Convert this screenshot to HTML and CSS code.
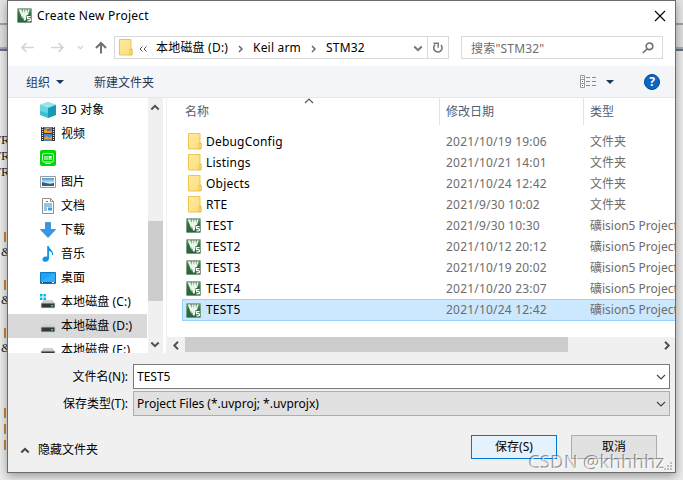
FILE: index.html
```
<!DOCTYPE html>
<html lang="zh-CN">
<head>
<meta charset="UTF-8" />
<title>Create New Project</title>
<link rel="stylesheet" href="styles.css">
</head>
<body>
<!-- shared icons -->
<svg class="defs">
  <defs>
    <linearGradient id="gold" x1="0" y1="0" x2="1" y2="1"><stop offset="0" stop-color="#ffe9a2" /><stop offset="1" stop-color="#fcdd7c" /></linearGradient>
    <linearGradient id="green" x1="0" y1="0" x2="0" y2="1"><stop offset="0" stop-color="#6e9b78" /><stop offset=".4" stop-color="#2f7341" /><stop offset="1" stop-color="#28623a" /></linearGradient>
    <linearGradient id="sky" x1="0" y1="0" x2="0" y2="1"><stop offset="0" stop-color="#3f97de" /><stop offset=".6" stop-color="#d5ecf7" /><stop offset="1" stop-color="#2b6170" /></linearGradient>
    <symbol id="folder" viewBox="0 0 14 17">
      <path d="M.5.5h11.5v9.500h1v6H.5z" fill="url(#gold)" stroke="#ecc64f" />
      <path d="M11 15.500v-5h2v5z" fill="#ffe694" stroke="#e3b93d" stroke-width=".8" />
    </symbol>
    <symbol id="keil" viewBox="0 0 15 15">
      <rect x=".3" y=".3" width="14.400" height="14.400" rx="1.200" fill="url(#green)" stroke="#8eab95" stroke-width=".6" />
      <path d="M1.800 1.500h2.700l.8 3.600.6-3.600h1.400l.5 3.500.6-3.500h1.300l.4 3.500.8-3.500h1.800L11 7H9.700l-1 5.500H7L5.800 8l-.4 3z" fill="#eef5ef" />
      <path d="M13.600 8.600h-3v2.100h1.900q1 0 1 1t-1 1.100h-2.100" fill="none" stroke="#fff" stroke-width="1.300" />
    </symbol>
    <symbol id="drive" viewBox="0 0 16 16">
      <path d="M3.500 6h9l2.500 3.500H1z" fill="#cfd1d2" />
      <rect x="1.300" y="9.300" width="13.400" height="4.400" rx=".6" fill="#333b3a" stroke="#8f9494" stroke-width=".6" />
      <rect x="11" y="11" width="2" height="1.500" fill="#38e03f" />
    </symbol>
    <symbol id="down" viewBox="0 0 10 6"><path d="M1 1l4 4 4-4" fill="none" stroke="currentColor" stroke-width="1.200" /></symbol>
    <symbol id="thick" viewBox="0 0 10 7"><path d="M1.300 1.500L5 5.200l3.700-3.700" fill="none" stroke="currentColor" stroke-width="2" /></symbol>
    <symbol id="tri" viewBox="0 0 8 4"><path d="M0 0h8L4 4z" fill="#1e395b" /></symbol>
  </defs>
</svg>

<div class="editor">
<pre class="code">TR
TR
TR



<b></b>
<i>&amp;</i>

<b></b>
<i>&amp;</i>

<b></b>
<i>&amp;</i>



<b></b>
<b></b>
<b></b></pre>
</div>

<div class="dialog">
  <div class="titlebar">
    <svg class="keil"><use href="#keil" /></svg>
    <span class="title">Create New Project</span>
    <svg class="close" viewBox="0 0 12 12"><path d="M1 1l10 10M11 1L1 11" stroke="#000" stroke-width="1.100" /></svg>
  </div>

  <div class="nav">
    <div class="arrows">
      <svg class="back" viewBox="0 0 12 10"><path d="M12 5H1M5 1L1 5l4 4" /></svg>
      <svg class="fwd" viewBox="0 0 12 10"><path d="M0 5h11M7 1l4 4-4 4" /></svg>
      <svg class="recent" viewBox="0 0 10 7"><use href="#thick" /></svg>
      <svg class="up" viewBox="0 0 12 12"><path d="M6 12V1.500M1 6.500l5-5 5 5" /></svg>
    </div>
    <div class="path">
      <svg class="folder"><use href="#folder" /></svg>
      <svg class="dbl" viewBox="0 0 8 6"><path d="M3.500.5L1 3l2.500 2.500M7.500.5L5 3l2.500 2.500" /></svg>
      <span class="crumb disk">本地磁盘 (D:)</span>
      <svg class="sep" viewBox="0 0 5 8"><path d="M1 1l3 3-3 3" /></svg>
      <span class="crumb keilarm">Keil arm</span>
      <svg class="sep" viewBox="0 0 5 8"><path d="M1 1l3 3-3 3" /></svg>
      <span class="crumb">STM32</span>
      <svg class="drop"><use href="#thick" /></svg>
      <span class="refresh"><svg viewBox="0 0 12 12"><path d="M3.200 2.600A4.200 4.200 0 1 0 9 3" fill="none" stroke="#777" stroke-width="1.600" /><path d="M1.500 1.200h4.700v4.500" fill="none" stroke="#777" stroke-width="1.500" /></svg></span>
    </div>
    <div class="search">
      <span>搜索"STM32"</span>
      <svg viewBox="0 0 12 12"><circle cx="7.500" cy="4.300" r="3.300" /><path d="M5.200 6.700L.8 11" /></svg>
    </div>
  </div>

  <div class="toolbar">
    <span class="organize">组织</span>
    <svg class="tri"><use href="#tri" /></svg>
    <span class="newdir">新建文件夹</span>
    <svg class="view" viewBox="0 0 17 13">
      <path d="M.5.5h4v12h-4zM.5 4.500h4M.5 8.500h4" fill="#fff" stroke="#9a9a9a" />
      <path d="M6 2.500h4M12 2.500h4M6 6.500h4M12 6.500h4M6 10.500h4M12 10.500h4" stroke="#8a8a8a" />
      <path d="M2 2h1v1H2z" fill="#31a354" /><path d="M2 6h1v1H2z" fill="#2475d0" /><path d="M2 10h1v1H2z" fill="#d22" />
    </svg>
    <svg class="tri"><use href="#tri" /></svg>
    <span class="help">?</span>
  </div>

  <div class="panes">
    <div class="tree">
      <div class="node"><svg viewBox="0 0 16 16"><path d="M0 3l8-3 8 3v10l-8 3-8-3z" fill="#3cc0d4" /><path d="M0 3l8-3 8 3-8 3z" fill="#9be5ee" /><path d="M8 6l8-3v10l-8 3z" fill="#159bb4" /><path d="M0 3l8 3v5l-8-2z" fill="#67d5e3" /></svg><span>3D 对象</span></div>
      <div class="node"><svg viewBox="0 0 16 16"><path d="M1 1h14v14H1z" fill="#333" /><path d="M4 1h8v6H4zM4 8h8v7H4z" fill="#4c86d3" /><path d="M4 4h2V2h3v3h3v2H4zM4 12l3-2 2 2 3-2v3H4z" fill="#e2a33d" /><path d="M7 3h3v2H7z" fill="#c5483c" /><path d="M2.500 1v14M13.500 1v14" stroke="#e8e8e8" stroke-width="1.200" stroke-dasharray="1 1" /></svg><span>视频</span></div>
      <div class="node"><svg viewBox="0 0 16 16"><rect width="16" height="16" rx="2" fill="#00d508" /><rect x="2.500" y="3.500" width="11" height="8.500" rx="1.500" fill="none" stroke="#c9ffcb" /><path d="M5 6v4M7 6v4M9.200 6v4M9 6l1 2 1-2v4M5.500 13.500h5" fill="none" stroke="#fff" /></svg></div>
      <div class="node"><svg viewBox="0 0 16 16"><path d="M.5 2.500h15v11H.5z" fill="#fff" stroke="#999" /><path d="M2 4h12v8H2z" fill="url(#sky)" /><path d="M2 8l4 1 4 1 4-1v3H2z" fill="#2c6672" /></svg><span>图片</span></div>
      <div class="node"><svg viewBox="0 0 16 16"><path d="M2.500.5h8l3 3v12h-11z" fill="#fff" stroke="#8f8f8f" /><path d="M10.500.5v3h3" fill="none" stroke="#8f8f8f" /><path d="M8 3.500H6M4 6h8M4 8h8M4 10h3M4 12h3" stroke="#2f8ad0" /><path d="M8 9.500h4v3H8z" fill="#39a0d8" /></svg><span>文档</span></div>
      <div class="node"><svg viewBox="0 0 16 16"><path d="M5.500.5h5v7h5L8 15.500.5 7.500h5z" fill="#3796e8" stroke="#2878c4" stroke-width=".7" /></svg><span>下载</span></div>
      <div class="node"><svg viewBox="0 0 16 16"><path d="M7.200 0h1.600c.3 3 4.700 4.200 4.200 9h-1c.2-2.500-1-3.600-3-4v7.500c0 4-6.500 4.400-6.500.9 0-2.300 2.500-3.400 4.700-2.600z" fill="#0d94ec" /></svg><span>音乐</span></div>
      <div class="node"><svg viewBox="0 0 16 16"><path d="M.5 2.500h15v11H.5z" fill="#1ba4fb" stroke="#1376bd" /><path d="M1 12.500h14" stroke="#0a5b99" /><path d="M2 12.500h1M12 12.500h2" stroke="#fff" /><path d="M1 11L14 3h1v9H1z" fill="#40b4ff" opacity=".6" /></svg><span>桌面</span></div>
      <div class="node"><svg viewBox="0 0 16 16"><use href="#drive" /><path d="M0 0h2.500v2.500H0zM3.500 0H6v2.500H3.500zM0 3.500h2.500V6H0zM3.500 3.500H6V6H3.500z" fill="#08b8e8" /></svg><span>本地磁盘 (C:)</span></div>
      <div class="node current"><svg><use href="#drive" /></svg><span>本地磁盘 (D:)</span></div>
      <div class="node"><svg><use href="#drive" /></svg><span>本地磁盘 (E:)</span></div>
    </div>

    <div class="vscroll">
      <svg class="flip"><use href="#thick" /></svg>
      <div class="vthumb"></div>
      <svg><use href="#thick" /></svg>
    </div>

    <div class="list">
      <div class="files">
        <div class="head">
          <span class="name">名称</span><span class="date">修改日期</span><span class="type">类型</span>
          <svg class="sorted"><use href="#down" /></svg>
        </div>
        <div class="row"><span class="name"><svg class="folder"><use href="#folder" /></svg>DebugConfig</span><span class="date">2021/10/19 19:06</span><span class="type">文件夹</span></div>
        <div class="row"><span class="name"><svg class="folder"><use href="#folder" /></svg>Listings</span><span class="date">2021/10/21 14:01</span><span class="type">文件夹</span></div>
        <div class="row"><span class="name"><svg class="folder"><use href="#folder" /></svg>Objects</span><span class="date">2021/10/24 12:42</span><span class="type">文件夹</span></div>
        <div class="row"><span class="name"><svg class="folder"><use href="#folder" /></svg>RTE</span><span class="date">2021/9/30 10:02</span><span class="type">文件夹</span></div>
        <div class="row"><span class="name"><svg class="keil"><use href="#keil" /></svg>TEST</span><span class="date">2021/9/30 10:30</span><span class="type">礦ision5 Project</span></div>
        <div class="row"><span class="name"><svg class="keil"><use href="#keil" /></svg>TEST2</span><span class="date">2021/10/12 20:12</span><span class="type">礦ision5 Project</span></div>
        <div class="row"><span class="name"><svg class="keil"><use href="#keil" /></svg>TEST3</span><span class="date">2021/10/19 20:02</span><span class="type">礦ision5 Project</span></div>
        <div class="row"><span class="name"><svg class="keil"><use href="#keil" /></svg>TEST4</span><span class="date">2021/10/20 23:07</span><span class="type">礦ision5 Project</span></div>
        <div class="row selected"><span class="name"><svg class="keil"><use href="#keil" /></svg>TEST5</span><span class="date">2021/10/24 12:42</span><span class="type">礦ision5 Project</span></div>
      </div>
      <div class="hscroll">
        <svg class="left"><use href="#thick" /></svg>
        <div class="hthumb"></div>
        <svg class="right"><use href="#thick" /></svg>
      </div>
    </div>
  </div>

  <div class="form">
    <label>文件名(N):</label>
    <div class="field">TEST5<svg><use href="#down" /></svg></div>
    <label>保存类型(T):</label>
    <div class="field combo">Project Files (*.uvproj; *.uvprojx)<svg><use href="#down" /></svg></div>
  </div>

  <div class="footer">
    <svg class="flip"><use href="#thick" /></svg>
    <span class="hide">隐藏文件夹</span>
    <div class="btn save">保存(S)</div>
    <div class="btn">取消</div>
  </div>
  <svg class="grip" viewBox="0 0 8 8"><path d="M6 0h2v2H6zM3 3h2v2H3zM6 3h2v2H6zM0 6h2v2H0zM3 6h2v2H3zM6 6h2v2H6z" fill="#bbb" /></svg>
</div>

<div class="watermark">CSDN @khhhhz</div>
</body>
</html>
```

FILE: styles.css
```
* {
  box-sizing: border-box;
}

body {
  margin: 0;
  width: 683px;
  height: 480px;
  overflow: hidden;
  position: relative;
  background: #ebebeb;
  font-family: "Noto Sans", "Noto Sans CJK SC", sans-serif;
  font-size: 12px;
  color: #000;
}

svg {
  display: block;
  flex: none;
}

.defs {
  position: absolute;
  width: 0;
  height: 0;
}

/* window behind the dialog */
.editor {
  position: absolute;
  left: 0;
  top: 0;
  width: 683px;
  height: 480px;
  overflow: hidden;
  background: linear-gradient(#e4e4e4 23px, #a0a0a0 23px, #a0a0a0 25px, #dedede 25px, #dedede 47px, #9dabc8 47px, #9dabc8 49px, #707070 49px, #707070 51px, #ebebeb 51px);
}

.code {
  margin: 132px 0 0 -7px;
  font: 13px/16px "Liberation Serif", serif;
  color: #222;
}

.code b {
  display: inline-block;
  width: 2px;
  height: 10px;
  margin-left: 11px;
  background: #c98435;
  vertical-align: middle;
}

.code i {
  margin-left: 8px;
  font-style: normal;
}

.dialog {
  position: relative;
  display: flex;
  flex-direction: column;
  width: 669px;
  height: 473px;
  margin-left: 7px;
  border: 1px solid #6b6b6b;
  background: #f0f0f0;
  box-shadow: 0 3px 9px rgba(0, 0, 0, .35);
}

.titlebar {
  display: flex;
  align-items: center;
  height: 29px;
  padding: 0 9px;
  background: #fff;
}

.keil {
  width: 15px;
  height: 15px;
}

.title {
  margin-left: 5px;
  flex: 1;
  letter-spacing: .25px;
}

.close {
  width: 12px;
  height: 12px;
}

.nav {
  display: flex;
  height: 36px;
  padding: 6px 12px 7px 13px;
  background: #fff;
}

.arrows {
  display: flex;
  align-items: center;
  width: 93px;
  fill: none;
  stroke: #d5d5d5;
  stroke-width: 1.6;
}

.back, .fwd {
  width: 13px;
  height: 11px;
}

.fwd {
  margin-left: 17px;
}

.recent {
  width: 7px;
  height: 5px;
  margin-left: 13px;
  color: #d5d5d5;
}

.up {
  width: 12px;
  height: 13px;
  margin-left: 11px;
  stroke: #707070;
  stroke-width: 2;
}

.path {
  display: flex;
  align-items: center;
  width: 335px;
  border: 1px solid #d9d9d9;
  padding-left: 4px;
}

.folder {
  width: 14px;
  height: 17px;
}

.dbl {
  width: 8px;
  height: 6px;
  margin: 2px 9px 0 6px;
  fill: none;
  stroke: #555;
}

.disk {
  width: 73px;
}

.crumb {
  margin-bottom: 1px;
  white-space: nowrap;
  letter-spacing: .2px;
}

.sep {
  width: 5px;
  height: 8px;
  margin: 2px 10px 0 9px;
  fill: none;
  stroke: #666;
  stroke-width: 1.5;
}

.keilarm {
  width: 49px;
}

.drop {
  width: 10px;
  height: 7px;
  margin: 2px 4px 0 auto;
  color: #777;
}

.refresh {
  display: flex;
  align-items: center;
  justify-content: center;
  width: 21px;
  height: 21px;
  border-left: 1px solid #d9d9d9;
}

.refresh svg {
  width: 12px;
  height: 12px;
}

.search {
  display: flex;
  align-items: center;
  justify-content: space-between;
  width: 202px;
  margin-left: 12px;
  padding: 0 8px 0 9px;
  border: 1px solid #d9d9d9;
  color: #6d6d6d;
  letter-spacing: .2px;
}

.search svg {
  width: 12px;
  height: 12px;
  fill: none;
  stroke: #6d6d6d;
  stroke-width: 1.6;
}

.toolbar {
  display: flex;
  align-items: center;
  height: 32px;
  padding: 0 15px 0 18px;
  background: #f4f5f8;
  border-bottom: 1px solid #e4e6e9;
  color: #1e395b;
}

.tri {
  width: 8px;
  height: 4px;
  margin-left: 6px;
}

.newdir {
  margin-left: 30px;
}

.view {
  width: 17px;
  height: 13px;
  margin: 0 3px 0 auto;
}

.help {
  width: 16px;
  height: 16px;
  margin-left: 30px;
  border-radius: 50%;
  background: #0a67c4;
  border: 1px solid #07468a;
  color: #fff;
  font-weight: bold;
  line-height: 14px;
  text-align: center;
}

.panes {
  display: flex;
  height: 255px;
  background: #fff;
}

.tree {
  width: 140px;
  overflow: hidden;
}

.node {
  display: flex;
  align-items: center;
  gap: 5px;
  height: 24px;
  width: 139px;
  padding-left: 32px;
  white-space: nowrap;
}

.node span {
  margin-bottom: 2px;
  letter-spacing: .1px;
}

.node svg {
  width: 16px;
  height: 16px;
}

.current {
  background: #d9d9d9;
}

.vscroll {
  display: flex;
  flex-direction: column;
  align-items: center;
  width: 15px;
  padding: 6px 0 5px;
  background: #f0f0f0;
  color: #505050;
}

.vscroll svg {
  width: 10px;
  height: 7px;
  margin-right: 1px;
}

.flip {
  transform: scaleY(-1);
}

.vthumb {
  width: 15px;
  height: 80px;
  margin: 110px 0 auto;
  background: #cdcdcd;
}

.list {
  width: 509px;
  margin-left: 3px;
  border-left: 1px solid #f0f0f0;
  overflow: hidden;
}

.files {
  height: 239px;
  padding-left: 15px;
}

.head {
  display: flex;
  position: relative;
  height: 27px;
  margin-bottom: 6px;
  line-height: 27px;
  color: #4c607a;
}

.head .name {
  padding-left: 3px;
}

.head .date, .head .type {
  border-left: 1px solid #e2e3e5;
}

.sorted {
  position: absolute;
  left: 122px;
  top: 0;
  width: 10px;
  height: 6px;
  color: #555;
  transform: scaleY(-1);
}

.row {
  display: flex;
  height: 21px;
  line-height: 22px;
  white-space: nowrap;
}

.row .name {
  display: flex;
  align-items: center;
  padding-left: 5px;
  letter-spacing: .2px;
}

.row .folder {
  margin: 0 4px 0 1px;
}

.row .keil {
  margin: 0 5px 0 -1px;
}

.row .date, .row .type {
  color: #6d6d6d;
}

.row .date {
  letter-spacing: .2px;
}

.name {
  width: 257px;
}

.date {
  width: 144px;
  padding-left: 7px;
}

.head .date, .head .type {
  padding-left: 6px;
}

.type {
  padding-left: 7px;
}

.row .name, .row .date, .row .type {
  flex: none;
}

.selected {
  width: 520px;
  height: 22px;
  background: #cce8ff;
  border: 1px solid #99d1ff;
  line-height: 20px;
}

.selected .name {
  width: 256px;
  padding-left: 4px;
}

.hscroll {
  display: flex;
  align-items: center;
  height: 16px;
  padding: 0 3px 0 4px;
  background: #f0f0f0;
  color: #505050;
}

.hscroll svg {
  width: 10px;
  height: 7px;
}

.left {
  transform: rotate(90deg);
}

.right {
  margin-left: auto;
  transform: rotate(-90deg);
}

.hthumb {
  width: 383px;
  height: 15px;
  margin: 0 0 1px 4px;
  background: #cdcdcd;
}

.form {
  display: grid;
  grid-template-columns: 120px 537px;
  column-gap: 5px;
  row-gap: 2px;
  padding-top: 11px;
}

.form label {
  line-height: 25px;
  text-align: right;
}

.field {
  display: flex;
  align-items: center;
  justify-content: space-between;
  height: 25px;
  padding: 0 3px 1px;
  border: 1px solid #7a7a7a;
  background: #fff;
}

.field svg {
  width: 10px;
  height: 6px;
  margin-top: 2px;
  color: #444;
}

.combo {
  border-color: #adadad;
  background: #e1e1e1;
}

.footer {
  display: flex;
  align-items: center;
  padding: 19px 18px 0 12px;
}

.footer svg {
  width: 10px;
  height: 7px;
  margin-top: 6px;
  color: #444;
}

.hide {
  margin: 4px auto 0 8px;
}

.btn {
  width: 86px;
  height: 24px;
  margin-left: 14px;
  border: 1px solid #adadad;
  background: #e1e1e1;
  line-height: 22px;
  text-align: center;
}

.save {
  border-color: #0078d7;
  background: #e5f1fb;
}

.grip {
  position: absolute;
  right: 3px;
  bottom: 2px;
  width: 8px;
  height: 8px;
}

.watermark {
  position: absolute;
  left: 529px;
  top: 449px;
  font-size: 18.500px;
  line-height: 26px;
  letter-spacing: .1px;
  white-space: nowrap;
  color: rgba(255, 255, 255, .6);
  text-shadow: -1px -1px 0 rgba(80, 80, 80, .65);
}
```
